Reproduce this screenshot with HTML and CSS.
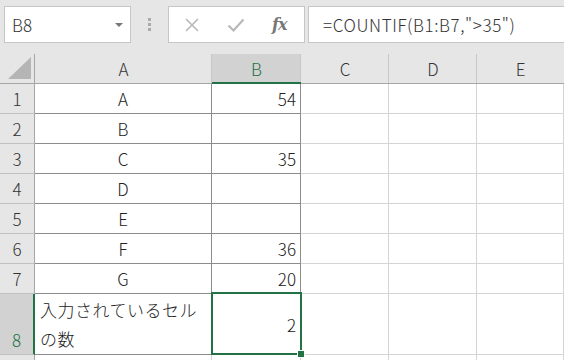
FILE: index.html
```html
<!DOCTYPE html>
<html lang="ja">
<head>
    <meta charset="UTF-8">
    <title>COUNTIF</title>
    <link rel="stylesheet" href="styles.css">
</head>
<body>
    <div class="toolbar">
        <div class="namebox">
            <span>B8</span>
            <span class="dropdown"></span>
        </div>
        <div class="grip">
            <span></span><span></span><span></span>
        </div>
        <div class="fbuttons">
            <svg class="icon" width="16" height="16" viewBox="0 0 16 16">
                <path d="M2 2 L14 14 M14 2 L2 14" stroke="#b8b8b8" stroke-width="1.6" fill="none"/>
            </svg>
            <svg class="icon" width="18" height="16" viewBox="0 0 18 16">
                <path d="M1.5 8.5 L6.5 13.5 L16.5 2.5" stroke="#b8b8b8" stroke-width="2.2" fill="none"/>
            </svg>
            <span class="fx">fx</span>
        </div>
        <div class="formula">=COUNTIF(B1:B7,"&gt;35")</div>
    </div>

    <div class="sheet">
        <!-- column headers -->
        <div class="corner">
            <svg width="23" height="22" viewBox="0 0 23 22"><polygon points="23,0 23,22 0,22" fill="#b5b5b5"/></svg>
        </div>
        <div class="colhead">A</div>
        <div class="colhead active">B</div>
        <div class="colhead">C</div>
        <div class="colhead">D</div>
        <div class="colhead last">E</div>

        <div class="rowhead">1</div><div class="cell center">A</div><div class="cell num">54</div><div class="grid"></div><div class="grid"></div><div class="grid"></div>
        <div class="rowhead">2</div><div class="cell center">B</div><div class="cell num"></div><div class="grid"></div><div class="grid"></div><div class="grid"></div>
        <div class="rowhead">3</div><div class="cell center">C</div><div class="cell num">35</div><div class="grid"></div><div class="grid"></div><div class="grid"></div>
        <div class="rowhead">4</div><div class="cell center">D</div><div class="cell num"></div><div class="grid"></div><div class="grid"></div><div class="grid"></div>
        <div class="rowhead">5</div><div class="cell center">E</div><div class="cell num"></div><div class="grid"></div><div class="grid"></div><div class="grid"></div>
        <div class="rowhead">6</div><div class="cell center">F</div><div class="cell num">36</div><div class="grid"></div><div class="grid"></div><div class="grid"></div>
        <div class="rowhead">7</div><div class="cell center">G</div><div class="cell num">20</div><div class="grid"></div><div class="grid"></div><div class="grid"></div>
        <div class="rowhead active tall">8</div><div class="cell wrap">入力されているセルの数</div><div class="cell num">2</div><div class="grid"></div><div class="grid"></div><div class="grid"></div>
        <div class="rowhead"></div><div class="grid"></div><div class="grid"></div><div class="grid"></div><div class="grid"></div><div class="grid"></div>

        <!-- selection of B8 -->
        <div class="selection"><span class="handle"></span></div>
    </div>
</body>
</html>
```

FILE: styles.css
```css
body {
    margin: 0;
    background: #ffffff;
    font-family: "Noto Sans CJK JP", "Noto Sans", sans-serif;
    font-weight: 300;
    color: #222;
    width: 564px;
    height: 360px;
    overflow: hidden;
}

/* formula bar */
.toolbar {
    display: flex;
    height: 54px;
    box-sizing: border-box;
    padding: 6px 0 0 4px;
    background: #e6e6e6;
}
.namebox {
    width: 127px;
    height: 37px;
    box-sizing: border-box;
    border: 1px solid #c6c6c6;
    background: #fff;
    display: flex;
    align-items: center;
    justify-content: space-between;
    padding: 0 7px 0 7px;
    font-size: 17px;
    color: #333;
}
.dropdown {
    width: 0;
    height: 0;
    border-left: 4px solid transparent;
    border-right: 4px solid transparent;
    border-top: 4px solid #777;
}
.grip {
    width: 37px;
    height: 37px;
    display: flex;
    flex-direction: column;
    align-items: center;
    justify-content: center;
    gap: 2px;
}
.grip span {
    width: 3px;
    height: 3px;
    background: #aaa;
}
.fbuttons {
    width: 137px;
    height: 37px;
    box-sizing: border-box;
    border: 1px solid #c6c6c6;
    background: #fff;
    display: flex;
    align-items: center;
    padding-left: 15px;
    gap: 27px;
}
.fx {
    font-family: "DejaVu Serif", serif;
    font-style: italic;
    font-weight: bold;
    font-size: 16px;
    color: #777;
    letter-spacing: -1px;
}
.formula {
    flex: 1;
    margin-left: 3px;
    margin-right: -1px;
    height: 37px;
    box-sizing: border-box;
    border: 1px solid #c6c6c6;
    background: #fff;
    padding-left: 14px;
    font-size: 17px;
    letter-spacing: 0.6px;
    line-height: 35px;
    color: #333;
}

/* sheet */
.sheet {
    position: relative;
    display: grid;
    grid-template-columns: 35px 177px 89px 88px 88px 1fr;
    grid-template-rows: 30px repeat(7, 30px) 61px 6px;
    font-size: 17px;
}
.sheet > div {
    box-sizing: border-box;
}
.corner {
    background: #e6e6e6;
    border-right: 1px solid #a6a6a6;
    border-bottom: 1px solid #a6a6a6;
    display: flex;
    align-items: flex-end;
    justify-content: flex-end;
    padding: 0 3px 4px 0;
}
.corner svg {
    display: block;
}
.colhead {
    background: #e6e6e6;
    border-bottom: 1px solid #a6a6a6;
    display: flex;
    align-items: center;
    justify-content: center;
    color: #333;
    position: relative;
}
.colhead::after {
    content: "";
    position: absolute;
    right: 0;
    bottom: 0;
    top: 0;
    width: 1px;
    background: #c8c8c8;
}
.colhead.last::after {
    display: none;
}
.colhead.active {
    background: #d2d2d2;
    color: #217346;
    border-bottom: 2px solid #217346;
}
.rowhead {
    background: #e6e6e6;
    border-right: 1px solid #a6a6a6;
    border-bottom: 1px solid #c0c0c0;
    display: flex;
    align-items: center;
    justify-content: center;
    color: #333;
}
.rowhead.active {
    background: #d2d2d2;
    color: #217346;
    border-right: 2px solid #217346;
}
.rowhead.tall {
    align-items: flex-end;
    padding-bottom: 2px;
}
.cell {
    border-right: 1px solid #8c8c8c;
    border-bottom: 1px solid #8c8c8c;
    display: flex;
    align-items: center;
    padding: 0 4px;
}
.center {
    justify-content: center;
}
.num {
    justify-content: flex-end;
}
.wrap {
    display: block;
    line-height: 29px;
    padding: 1px 4px 0 5px;
    letter-spacing: 0.5px;
}
.grid {
    border-right: 1px solid #d4d4d4;
    border-bottom: 1px solid #d4d4d4;
}

/* active cell outline */
.selection {
    position: absolute;
    left: 211px;
    top: 238px;
    width: 91px;
    height: 63px;
    box-sizing: border-box;
    border: 2px solid #217346;
    pointer-events: none;
}
.handle {
    position: absolute;
    right: -5px;
    bottom: -5px;
    width: 6px;
    height: 6px;
    background: #217346;
    border: 1px solid #fff;
}
```
